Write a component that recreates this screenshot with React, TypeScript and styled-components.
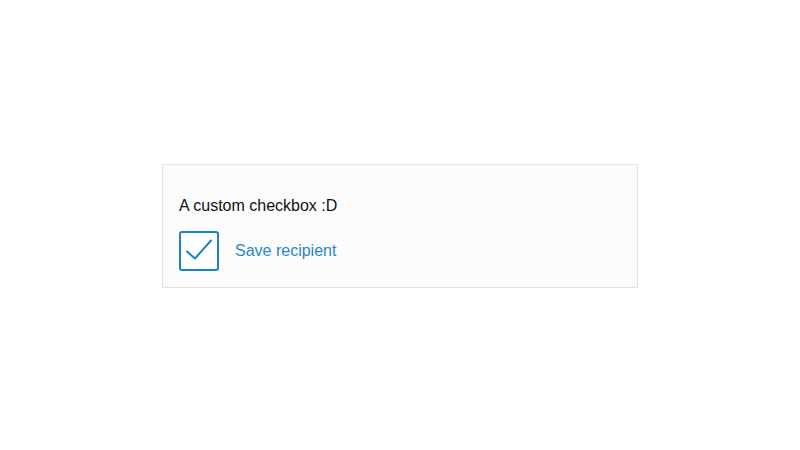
import { useState } from 'react';
import styled, { createGlobalStyle } from 'styled-components';

const GlobalStyle = createGlobalStyle`
  html, body {
    margin: 0;
    padding: 0;
    background: #ffffff;
    font-family: "Liberation Sans", Arial, sans-serif;
  }
`;

function App() {
  const [checked, setChecked] = useState<boolean>(true);

  return (
    <Page>
      <GlobalStyle />
      <Card>
        <Title>A custom checkbox :D</Title>
        <CheckRow onClick={() => setChecked(!checked)}>
          <Box>
            {checked && (
              <svg width="36" height="36" viewBox="0 0 36 36" fill="none">
                <path
                  d="M6 18.5 L14 25.5 L30 7.5"
                  stroke="#1a83c6"
                  strokeWidth="2"
                  strokeLinecap="round"
                  strokeLinejoin="round"
                />
              </svg>
            )}
          </Box>
          <Label>Save recipient</Label>
        </CheckRow>
      </Card>
    </Page>
  );
}

export default App;

const Page = styled.div`
  width: 800px;
  height: 450px;
  display: flex;
  align-items: center;
  justify-content: center;
`;

const Card = styled.div`
  box-sizing: border-box;
  width: 476px;
  margin-top: 2px;
  padding: 32px 16px 16px 16px;
  background: #fcfcfc;
  border: 1px solid #e2e2e2;
  display: flex;
  flex-direction: column;
  gap: 16px;
`;

const Title = styled.p`
  margin: 0;
  font-size: 16px;
  line-height: 18px;
  color: #111111;
`;

const CheckRow = styled.label`
  display: flex;
  align-items: center;
  gap: 16px;
  cursor: pointer;
`;

const Box = styled.span`
  box-sizing: border-box;
  width: 40px;
  height: 40px;
  border: 2px solid #1a83c6;
  border-radius: 3px;
  background: #ffffff;
  display: flex;
  align-items: center;
  justify-content: center;
`;

const Label = styled.span`
  font-size: 16px;
  color: #2a86c6;
`;
